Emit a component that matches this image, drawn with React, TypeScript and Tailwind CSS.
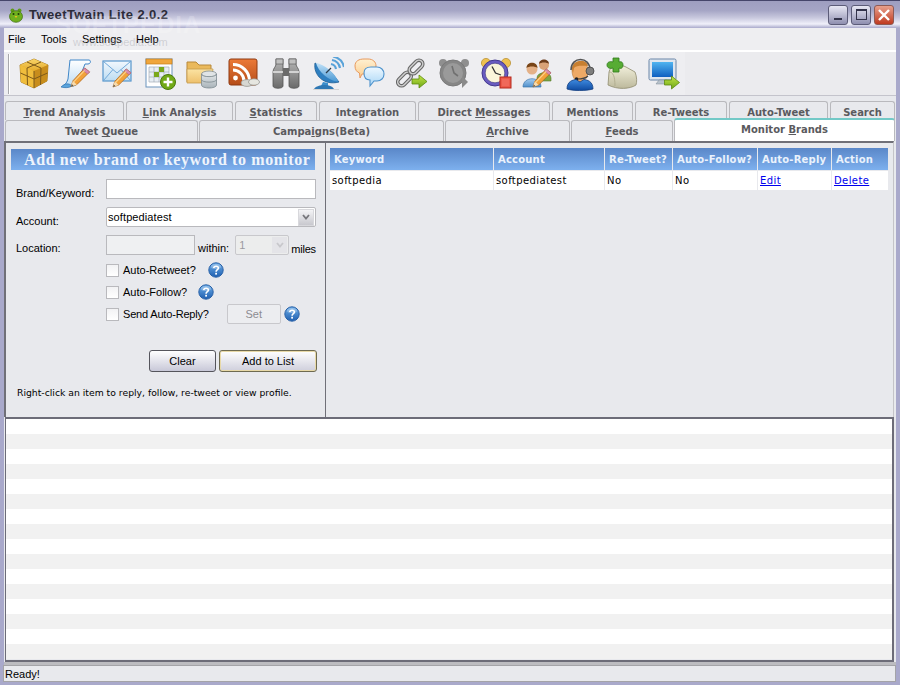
import React from "react";

const Pencil = ({ x = 0, y = 0, s = 1 }: { x?: number; y?: number; s?: number }) => (
  <g transform={`translate(${x} ${y}) scale(${s})`}>
    <path d="M1 20 L3 14 L15 1 L20 5 L7 18 Z" fill="#f2a23a" stroke="#a8601a" strokeWidth="0.7" />
    <path d="M1 20 L3 14 L7 18 Z" fill="#f7dcae" />
    <path d="M1 20 L2 17.5 L3.5 19 Z" fill="#444" />
    <path d="M15 1 L20 5 L18 7.2 L12.8 3.2 Z" fill="#d98ab0" stroke="#a55c84" strokeWidth="0.5" />
    <path d="M4 15 L15 3.5" stroke="#fbd48c" strokeWidth="1.2" />
  </g>
);

const GreenArrow = ({ x = 0, y = 0 }: { x?: number; y?: number }) => (
  <path
    transform={`translate(${x} ${y})`}
    d="M0 4 H7 V0 L15 6.5 L7 13 V9 H0 Z"
    fill="url(#gGreen)"
    stroke="#5d8a10"
    strokeWidth="0.8"
  />
);

const Help = () => (
  <svg width="16" height="16" viewBox="0 0 16 16" className="block shrink-0">
    <circle cx="8" cy="8" r="7.2" fill="url(#gHelp)" stroke="#2a62a8" strokeWidth="1" />
    <ellipse cx="8" cy="4.5" rx="5" ry="2.6" fill="#fff" opacity="0.28" />
    <path d="M5.8 6 C5.8 3.6 10.4 3.6 10.4 6 C10.4 7.8 8.1 7.6 8.1 9.8" fill="none" stroke="#fff" strokeWidth="1.6" />
    <rect x="7.2" y="10.8" width="1.8" height="1.8" fill="#fff" />
  </svg>
);

const I = ({ children }: { children: React.ReactNode }) => (
  <svg width="32" height="34" viewBox="0 0 32 34" className="block shrink-0">
    {children}
  </svg>
);

const LinkPart = ({ cx, cy }: { cx: number; cy: number }) => (
  <>
    <rect x="-8" y="-3.8" width="16" height="7.6" rx="3.8" transform={`translate(${cx} ${cy}) rotate(-45)`} stroke="#666" strokeWidth="3.6" />
    <rect x="-8" y="-3.8" width="16" height="7.6" rx="3.8" transform={`translate(${cx} ${cy}) rotate(-45)`} stroke="#cfcfcf" strokeWidth="1.5" />
  </>
);

const icons: React.ReactNode[] = [
  <I key="box">
    <path d="M16 2 L30 8 L29 24 L16 31 L3 25 L2 8 Z" fill="#e2a92b" stroke="#9a6d14" strokeWidth="0.8" />
    <path d="M16 2 L30 8 L16 14 L2 8 Z" fill="url(#gGold)" />
    <path d="M16 14 L30 8 L29 24 L16 31 Z" fill="#c88d1c" />
    <path d="M2 8 L16 14 L16 31 L3 25 Z" fill="#f0bd3c" />
    <path d="M9 5 L23 11 M23 5 L9 11 M16 14 V31 M2.5 16 L16 22 L29.5 16 M9 11 L9.5 28 M23 11 L22.5 28" stroke="#7d5a1a" strokeWidth="1" fill="none" />
  </I>,
  <I key="scroll">
    <path d="M10 3 H29 C31 3 31 7 28 7 L25 7 L18 25 C16 30 10 30 3 29 C6 27 7 25 8 22 Z" fill="url(#gPaper)" stroke="#3f86c8" strokeWidth="1" />
    <path d="M1 30 C5 26 9 26 12 29 C9 31 5 31 1 30 Z" fill="#5ba4dc" stroke="#2e72b2" strokeWidth="0.7" />
    <Pencil x={10} y={10} s={0.98} />
  </I>,
  <I key="mail">
    <rect x="1" y="4" width="28" height="20" fill="url(#gMail)" stroke="#5796cc" strokeWidth="1.2" />
    <path d="M1.5 4.5 L15 16 L28.5 4.5 M1.5 23.5 L11 12.5 M28.5 23.5 L19 12.5" fill="none" stroke="#72a9d9" strokeWidth="1" />
    <Pencil x={10} y={11} s={0.95} />
  </I>,
  <I key="cal">
    <rect x="2" y="2" width="26" height="28" fill="#fff" stroke="#6a93bd" strokeWidth="1" />
    <rect x="2" y="2" width="26" height="5" fill="#f0a63c" stroke="#c77e1a" strokeWidth="0.7" />
    <path d="M5 10 H25 V25 H5 Z M10 10 V25 M15 10 V25 M20 10 V25 M5 15 H25 M5 20 H25" fill="#e8eef4" stroke="#a3aeb8" strokeWidth="0.7" />
    <rect x="10" y="15" width="5" height="5" fill="#7aa81c" />
    <rect x="15" y="10" width="5" height="5" fill="#7aa81c" />
    <circle cx="24" cy="25" r="7.5" fill="#71a916" stroke="#4a7a0c" strokeWidth="1" />
    <path d="M24 20.5 V29.5 M19.5 25 H28.5" stroke="#fff" strokeWidth="2.4" />
  </I>,
  <I key="folder">
    <path d="M1 5 H10 L13 8 H25 V25 H1 Z" fill="#eab95c" stroke="#b8893a" strokeWidth="1" />
    <path d="M1 12 H27 L25 26 H1 Z" fill="url(#gFold)" stroke="#c49a4b" strokeWidth="0.8" />
    <ellipse cx="23" cy="17" rx="7.5" ry="3" fill="#e0e4e6" stroke="#7e8a90" strokeWidth="0.8" />
    <path d="M15.5 17 V28 C15.5 32 30.5 32 30.5 28 V17 C30.5 20.5 15.5 20.5 15.5 17 Z" fill="url(#gSteel)" stroke="#7e8a90" strokeWidth="0.8" />
    <path d="M15.5 22.5 C15.5 26 30.5 26 30.5 22.5" fill="none" stroke="#7e8a90" strokeWidth="0.8" />
  </I>,
  <I key="rss">
    <rect x="1" y="2" width="28" height="26" rx="2" fill="url(#gRss)" stroke="#8f3a12" strokeWidth="1" />
    <circle cx="7.5" cy="21" r="2.4" fill="#fff" />
    <path d="M5 13 A11 11 0 0 1 16 24 M5 7.5 A16.5 16.5 0 0 1 21.5 24" fill="none" stroke="#fff" strokeWidth="3" />
    <ellipse cx="19" cy="26" rx="6" ry="3.4" fill="#d7d7d2" stroke="#8e8e88" strokeWidth="0.7" />
    <ellipse cx="26" cy="25" rx="5.5" ry="3.2" fill="#e6e6e0" stroke="#8e8e88" strokeWidth="0.7" />
  </I>,
  <I key="bin">
    <path d="M6 2 H13 V29 C13 32 3 32 3 29 V15 C3 11 6 10 6 7 Z" fill="url(#gBin)" stroke="#545454" strokeWidth="0.8" />
    <path d="M19 2 H26 V7 C26 10 29 11 29 15 V29 C29 32 19 32 19 29 Z" fill="url(#gBin)" stroke="#545454" strokeWidth="0.8" />
    <rect x="13" y="11" width="6" height="8" fill="#6a6a6a" />
    <rect x="6" y="2" width="7" height="5" fill="#c0c0c0" stroke="#545454" strokeWidth="0.6" />
    <rect x="19" y="2" width="7" height="5" fill="#c0c0c0" stroke="#545454" strokeWidth="0.6" />
    <path d="M3 15 H13 M19 15 H29" stroke="#e8e8e8" strokeWidth="1.4" />
  </I>,
  <I key="dish">
    <path d="M3 6 C1 18 12 29 27 25 L19 15 Z" fill="#2f7fc0" stroke="#205f96" strokeWidth="0.8" />
    <path d="M4 6 C6 14 16 24 26 24.5 C24 17 12 7 4 6 Z" fill="url(#gDish)" />
    <path d="M14 16 L19 11" stroke="#2b3b4b" strokeWidth="1.2" />
    <path d="M19 7 A6 6 0 0 1 24 12 M20 3 A10 10 0 0 1 28 11 M21 -0.5 A14 14 0 0 1 32 10" fill="none" stroke="#5aa3d9" strokeWidth="2.2" />
    <path d="M11 25 L9 29 H16 L16 26 Z" fill="#3c8ecb" />
    <path d="M2 32 C4 29 8 28 13 28 C17 28 20 29 22 32 Z" fill="#2f78b4" />
    <rect x="1" y="32" width="26" height="1" fill="#d4d4d4" />
  </I>,
  <I key="chat">
    <path d="M1 9 C1 4 5 2 10 2 H14 C19 2 22 5 22 9 C22 14 18 17 13 17 H8 L6 21 L5.5 16 C3 15 1 13 1 9 Z" fill="url(#gBubO)" stroke="#e89a5e" strokeWidth="1" />
    <path d="M10 16 C10 12 13 10 17 10 H23 C27 10 30 13 30 17 C30 21 27 24 23 24 H20 L16 29 L16 23 C12 23 10 20 10 16 Z" fill="url(#gBubB)" stroke="#4d92cc" strokeWidth="1.1" />
  </I>,
  <I key="link">
    <g fill="none">
      <LinkPart cx={8.5} cy={22} />
      <LinkPart cx={20} cy={10} />
    </g>
    <GreenArrow x={16} y={18} />
  </I>,
  <I key="clock-off">
    <circle cx="5" cy="6" r="4" fill="#8f8f8f" />
    <circle cx="27" cy="6" r="4" fill="#8f8f8f" />
    <circle cx="15" cy="16" r="13" fill="#868686" stroke="#7a7a7a" />
    <circle cx="15" cy="16" r="10" fill="#9a9a9a" />
    <path d="M14 9 L16 16 L20 19" fill="none" stroke="#707070" strokeWidth="1.6" />
    <path d="M24 19 L30 25 L24 31 Z" fill="#8a8a8a" />
  </I>,
  <I key="alarm">
    <circle cx="6" cy="6" r="4.6" fill="#eec04f" stroke="#b58b2b" strokeWidth="0.7" />
    <circle cx="26" cy="6" r="4.6" fill="#eec04f" stroke="#b58b2b" strokeWidth="0.7" />
    <circle cx="15" cy="16" r="13" fill="#6a5cc0" stroke="#43398e" strokeWidth="1" />
    <circle cx="15" cy="16" r="9.8" fill="#fbf6da" stroke="#413a80" strokeWidth="0.6" />
    <path d="M12 9.5 L15.5 16 L21 18" fill="none" stroke="#333" strokeWidth="1.3" />
    <rect x="20" y="20" width="11" height="11" fill="#ec5a4a" stroke="#b5281c" strokeWidth="1" />
    <rect x="22" y="22" width="7" height="7" fill="#f0695a" />
  </I>,
  <I key="people">
    <circle cx="22" cy="8" r="5" fill="#d9a277" />
    <path d="M17 7 C17 1 27 1 27 7 C25 5 19 5 17 7 Z" fill="#6d3d1c" />
    <path d="M15 21 C15 14 29 14 29 21 V24 H15 Z" fill="#7ca645" stroke="#567a2a" strokeWidth="0.6" />
    <circle cx="10" cy="12" r="5.5" fill="#e4b187" />
    <path d="M4.5 11 C4.5 4 15.5 4 15.5 11 C13 9 7 9 4.5 11 Z" fill="#784518" />
    <path d="M1 30 C1 19 19 19 19 30 Z" fill="url(#gBlueShirt)" stroke="#3e75ab" strokeWidth="0.7" />
    <Pencil x={10} y={11} s={0.95} />
  </I>,
  <I key="agent">
    <path d="M8 13 C8 3 24 3 24 13 C24 21 20 25 16 25 C12 25 8 21 8 13 Z" fill="#eda966" stroke="#b87a3c" strokeWidth="0.6" />
    <path d="M8 12 C8 2 23 1 24 9 C19 9 13 8 10 11 L9 16 Z" fill="#c77f30" />
    <path d="M7 13 C7 -1 26 -1 26 13" fill="none" stroke="#555" strokeWidth="1.6" />
    <circle cx="26" cy="14" r="4" fill="#7e7e7e" stroke="#444" strokeWidth="0.8" />
    <path d="M24 19 C21 22 17 22 13 22" fill="none" stroke="#444" strokeWidth="1.2" />
    <circle cx="12.5" cy="22" r="1.8" fill="#222" />
    <path d="M3 32 C3 24 9 23 12 22.5 L16 25 L20 22.5 C23 23 29 24 29 32 C22 34 9 34 3 32 Z" fill="url(#gDeepBlue)" stroke="#143f80" strokeWidth="0.8" />
  </I>,
  <I key="beige">
    <path d="M2 28 L3 15 C4 8 15 7 20 10 L29 15 C31 20 31 25 30 28 C24 32 12 33 2 28 Z" fill="url(#gBeige)" stroke="#8f8c6e" strokeWidth="0.8" />
    <path d="M3 15 C7 15 9 19 9 29" fill="none" stroke="#a9a688" strokeWidth="0.8" />
    <path d="M7 1 H13 V5 C16 4 17 6 17 8 C17 11 15 12 13 11 V15 H7 V11 C4 12 1 11 1 8 C1 5 4 4 7 5 Z" fill="#57ac34" stroke="#2e7a1a" strokeWidth="0.8" />
  </I>,
  <I key="monitor">
    <rect x="1" y="2" width="27" height="21" rx="1.5" fill="#dfe6ef" stroke="#6b86a8" strokeWidth="1" />
    <rect x="4" y="5" width="21" height="15" fill="url(#gScreen)" />
    <path d="M11 23 H19 L20 27 H8 Z" fill="#b8c2cc" stroke="#7d8894" strokeWidth="0.5" />
    <GreenArrow x={16.5} y={19} />
  </I>,
];

const Defs = () => (
  <svg width="0" height="0" className="block">
    <defs>
      {(
        [
          ["gGreen", "#c4e648", "#6da616"],
          ["gHelp", "#6eaee8", "#1f5fb0"],
          ["gGold", "#f8d468", "#e5ab2c"],
          ["gPaper", "#ffffff", "#bcdcf4"],
          ["gMail", "#f2f8fd", "#bcdcf2"],
          ["gFold", "#fbe3a3", "#eec06c"],
          ["gSteel", "#e4e8ea", "#a8b2b8"],
          ["gRss", "#ec7a38", "#b54c18"],
          ["gBin", "#b8b8b8", "#6a6a6a"],
          ["gDish", "#c2e2f8", "#4d9ad4"],
          ["gBubO", "#fff1d2", "#fbcc8e"],
          ["gBubB", "#eef8ff", "#a9d6f6"],
          ["gBlueShirt", "#a6cdf0", "#4f8fca"],
          ["gDeepBlue", "#3f8be0", "#0f4aa0"],
          ["gBeige", "#f2f0dc", "#bdb99c"],
          ["gScreen", "#50b4f0", "#0f5fc0"],
        ] as const
      ).map(([id, a, b]) => (
        <linearGradient key={id} id={id} x1="0" y1="0" x2="0" y2="1">
          <stop offset="0" stopColor={a} />
          <stop offset="1" stopColor={b} />
        </linearGradient>
      ))}
    </defs>
  </svg>
);

const tabBase =
  "flex items-center justify-center shrink-0 rounded-t-[3px] border border-b-0 border-[#b9b9bd] bg-[#e8e9ed] text-[10px] font-bold text-[#5a5a5e]";

const row1: [React.ReactNode, string][] = [
  [<><u>T</u>rend Analysis</>, "w-[119px]"],
  [<><u>L</u>ink Analysis</>, "w-[107px]"],
  [<><u>S</u>tatistics</>, "w-[82px]"],
  ["Integration", "w-[97px]"],
  [<>Direct <u>M</u>essages</>, "w-[132px]"],
  ["Mentions", "w-[81px]"],
  ["Re-Tweets", "w-[92px]"],
  ["Auto-Tweet", "w-[99px]"],
  ["Search", "w-[65px]"],
];

const row2: [React.ReactNode, string][] = [
  [<>Tweet <u>Q</u>ueue</>, "w-[193px]"],
  [<>Campa<u>i</u>gns(Beta)</>, "w-[245px]"],
  [<><u>A</u>rchive</>, "w-[125px]"],
  [<><u>F</u>eeds</>, "w-[102px]"],
];

const Check = ({ label, tight }: { label: string; tight?: boolean }) => (
  <div className="flex items-center gap-[4px]">
    <span className="block w-[13px] h-[13px] border border-[#b9b9bd] bg-[linear-gradient(#f2f2f4,#ffffff)]" />
    <span className={tight ? "tracking-[-0.18px] pt-px" : ""}>{label}</span>
  </div>
);

const Chevron = ({ faded }: { faded?: boolean }) => (
  <svg width="8" height="6" viewBox="0 0 8 6" className="block">
    <path d="M1 1 L4 4.5 L7 1" fill="none" stroke={faded ? "#c8c8cc" : "#77777c"} strokeWidth="1.8" />
  </svg>
);

const columns = [
  ["Keyword", "softpedia"],
  ["Account", "softpediatest"],
  ["Re-Tweet?", "No"],
  ["Auto-Follow?", "No"],
  ["Auto-Reply", "Edit"],
  ["Action", "Delete"],
];

const stripes = Array.from({ length: 16 }, (_, i) => i);

export default function App() {
  return (
    <div className="relative w-[900px] h-[685px] overflow-hidden flex flex-col bg-[#a9a9cb] font-['Liberation_Sans',sans-serif] text-[11px] text-black">
      <Defs />
      <div className="h-[28px] shrink-0 flex items-center pl-[8px] pr-[6px] border-t border-[#45456a] bg-[linear-gradient(#9e9ec0_0%,#a5a5c5_35%,#c8c8de_62%,#f0f0fa_85%,#a9a9cb_100%)]">
        <svg width="16" height="16" viewBox="0 0 16 16" className="block shrink-0">
          <circle cx="4.5" cy="3.5" r="2" fill="#5e9a1a" />
          <circle cx="11.5" cy="3.5" r="2" fill="#5e9a1a" />
          <ellipse cx="8" cy="9.5" rx="6.5" ry="5.8" fill="#6fb01e" stroke="#3c6c0c" strokeWidth="0.7" />
          <circle cx="5.5" cy="7" r="1" fill="#1e3a08" />
          <circle cx="10.5" cy="7" r="1" fill="#1e3a08" />
          <path d="M6.5 9 L9.5 9 L8 11 Z" fill="#e8c020" />
        </svg>
        <span className="ml-[5px] text-[13px] font-bold tracking-[0.4px] text-[#2b2b38]">TweetTwain Lite 2.0.2</span>
        <div className="ml-auto flex items-center gap-[3px]">
          <div className="w-[20px] h-[20px] rounded-[3px] border border-[#5c5c78] bg-[linear-gradient(#e8e8f4,#8f8fb0)] flex items-end justify-center pb-[4px]">
            <span className="block w-[8px] h-[2px] bg-[#33334a]" />
          </div>
          <div className="w-[20px] h-[20px] rounded-[3px] border border-[#5c5c78] bg-[linear-gradient(#e8e8f4,#8f8fb0)] flex items-center justify-center">
            <span className="block w-[11px] h-[11px] border border-t-[2px] border-[#33334a]" />
          </div>
          <div className="w-[20px] h-[20px] rounded-[3px] border border-[#8e5a54] bg-[linear-gradient(#e8a08c,#bf3a20)] flex items-center justify-center">
            <svg width="14" height="14" viewBox="0 0 14 14" className="block">
              <path d="M2 2 L12 12 M12 2 L2 12" stroke="#fff" strokeWidth="2.4" />
            </svg>
          </div>
        </div>
      </div>

      <div className="flex-1 min-h-0 ml-[4px] mr-[4px] mb-[3px] flex flex-col bg-[#e8e9ed]">
        <div className="h-[22px] shrink-0 flex items-center bg-[#eeeef1] text-[11px]">
          <span className="ml-[4px] w-[16px]">File</span>
          <span className="ml-[17px] w-[25px]">Tools</span>
          <span className="ml-[16px] w-[39px]">Settings</span>
          <span className="ml-[15px]">Help</span>
        </div>
        <div className="h-[46px] shrink-0 flex items-center pl-[4px] border-t-2 border-t-white border-b border-b-[#c4c4cc] bg-[#eeeef1]">
          <span className="block w-[2px] h-[40px] bg-[#a8a8ac] border-r border-white" />
          <div className="ml-[8px] flex items-center gap-[10px]">{icons}</div>
          <div className="ml-[5px] flex-1 self-stretch bg-[#ebebee]" />
        </div>
        <div className="h-[5px] shrink-0" />
        <div className="h-[19px] shrink-0 flex gap-[2px] pl-px font-['DejaVu_Sans',sans-serif]">
          {row1.map(([t, w], i) => (
            <div key={i} className={`${tabBase} ${w} pt-[3px]`}>
              <span>{t}</span>
            </div>
          ))}
        </div>
        <div className="h-[21px] shrink-0 flex items-end gap-px pl-px font-['DejaVu_Sans',sans-serif]">
          {row2.map(([t, w], i) => (
            <div key={i} className={`${tabBase} ${w} h-[21px] pt-[1px]`}>
              <span>{t}</span>
            </div>
          ))}
          <div className="w-[221px] h-[23px] shrink-0 rounded-t-[3px] border border-b-0 border-[#b9b9bd] border-t-2 border-t-[#72c9c7] bg-white flex justify-center pt-[2px] text-[10px] font-bold text-[#5a5a5e]">
            <span>Monitor <u>B</u>rands</span>
          </div>
        </div>

        <div className="h-[276px] shrink-0 flex border-t-2 border-l-2 border-t-[#707078] border-l-[#707078] border-r border-r-[#c4c4c8] mr-[2px]">
          <div className="w-[320px] shrink-0 border-r border-[#707078] pl-[5px] pt-[6px] pr-[9px] flex flex-col">
            <div className="h-[21px] mr-px bg-[linear-gradient(#5a87c8,#7db0ee)] flex items-center pl-[13px] font-['Liberation_Serif',serif] font-bold text-[16px] tracking-[0.6px] text-[#eef4fc] whitespace-nowrap overflow-hidden">
              Add new brand or keyword to monitor
            </div>
            <div className="mt-[9px] h-[20px] flex items-center">
              <span className="w-[95px] pl-[5px] pt-[8px]">Brand/Keyword:</span>
              <div className="w-[210px] h-[20px] border border-[#b9b9bd] bg-white" />
            </div>
            <div className="mt-[8px] h-[20px] flex items-center">
              <span className="w-[95px] pl-[5px] pt-[8px]">Account:</span>
              <div className="w-[210px] h-[20px] rounded-[2px] border border-[#b9b9bd] bg-white flex items-center pl-[1px] pr-px justify-between">
                <span className="tracking-[0.1px]">softpediatest</span>
                <div className="w-[16px] h-[17px] border border-[#d8d8dc] bg-[linear-gradient(#f4f4f6,#c8c8ce)] flex items-center justify-center">
                  <Chevron />
                </div>
              </div>
            </div>
            <div className="mt-[8px] h-[20px] flex items-center">
              <span className="w-[95px] pl-[5px] pt-[6px]">Location:</span>
              <div className="w-[89px] h-[20px] border border-[#b9b9bd] bg-[#eff0f2]" />
              <span className="ml-[3px] pt-[6px]">within:</span>
              <div className="ml-[6px] w-[54px] h-[20px] rounded-[2px] border border-[#c8c8cc] bg-[#eceded] flex items-center justify-between pl-[3px] pr-px text-[#9a9aa0]">
                <span>1</span>
                <div className="w-[15px] h-[16px] flex items-center justify-center bg-[#e4e4e8]">
                  <Chevron faded />
                </div>
              </div>
              <span className="ml-[2px] pt-[8px] tracking-[-0.2px]">miles</span>
            </div>
            <div className="mt-[7px] h-[16px] ml-[95px] flex items-center">
              <Check label="Auto-Retweet?" />
              <span className="ml-[12px]"><Help /></span>
            </div>
            <div className="mt-[6px] h-[16px] ml-[95px] flex items-center">
              <Check label="Auto-Follow?" />
              <span className="ml-[11px]"><Help /></span>
            </div>
            <div className="mt-[4px] h-[20px] ml-[95px] flex items-center">
              <Check label="Send Auto-Reply?" tight />
              <div className="ml-[18px] w-[54px] h-[20px] rounded-[2px] border border-[#c8c8cc] bg-[#ecedf0] flex items-center justify-center text-[#8c8c92]">Set</div>
              <span className="ml-[3px]"><Help /></span>
            </div>
            <div className="mt-[26px] flex justify-end gap-[3px] -mr-px text-[11px]">
              <div className="w-[67px] h-[22px] rounded-[3px] border border-[#55555c] bg-[linear-gradient(#ffffff,#c8c8d8)] flex items-center justify-center">Clear</div>
              <div className="w-[98px] h-[22px] rounded-[3px] border border-[#6e6a50] bg-[linear-gradient(#fff,#cfcfdc)] shadow-[inset_0_0_0_1px_#e8d9a8] flex items-center justify-center">Add to List</div>
            </div>
            <div className="mt-[14px] pl-[6px] font-['DejaVu_Sans',sans-serif] text-[9.25px] whitespace-nowrap">Right-click an item to reply, follow, re-tweet or view profile.</div>
          </div>

          <div className="flex-1 min-w-0 pl-[4px] pt-[5px] font-['DejaVu_Sans',sans-serif]">
            <div className="w-[558px] grid grid-cols-[163px_110px_67px_84px_73px_56px] gap-x-px">
              {columns.map(([h]) => (
                <div key={h} className="h-[22px] flex items-center pl-[4px] bg-[linear-gradient(#5a87c8,#7db0ee)] text-[10px] font-bold tracking-[0.2px] text-[#eaf2fc] whitespace-nowrap overflow-hidden">{h}</div>
              ))}
              {columns.map(([h, v]) => (
                <div key={h} className={`mt-px h-[19px] flex items-center pl-[2px] bg-white text-[10px] tracking-[0.4px] ${v === "Edit" || v === "Delete" ? "text-[#0000ee] underline" : ""}`}>{v}</div>
              ))}
            </div>
          </div>
        </div>

        <div className="h-[245px] ml-px shrink-0 flex flex-col border-2 border-l-[1.5px] border-[#6c6c78] mr-[2px] overflow-hidden">
          {stripes.map((i) => (
            <div key={i} className={`h-[15px] shrink-0 ${i % 2 === 0 ? "bg-white" : "bg-[#f1f1f1]"}`} />
          ))}
        </div>

        <div className="h-[3px] shrink-0 bg-[#bcbcc0]" />
        <div className="h-[17px] shrink-0 border border-[#a4a4a8] -ml-px flex items-center pl-[1px] pt-px bg-[#e8e9ed] text-[11px]">Ready!</div>
      </div>

      <div className="absolute left-[55px] top-[7px] font-bold text-[24px] tracking-[1px] text-white/20 pointer-events-none">SOFTPEDIA</div>
      <div className="absolute left-[73px] top-[34px] text-[11px] text-[#a0a0a8]/40 pointer-events-none">www.softpedia.com</div>
    </div>
  );
}
